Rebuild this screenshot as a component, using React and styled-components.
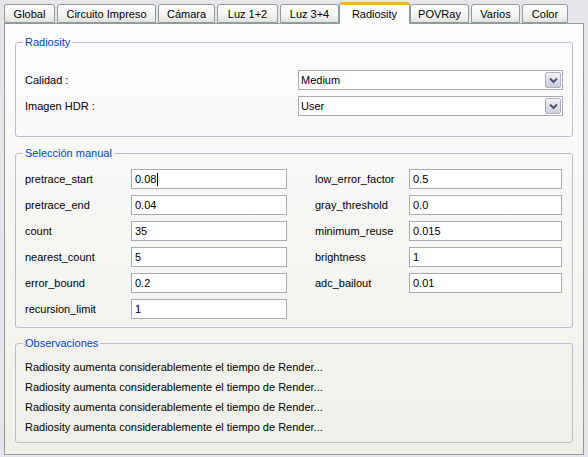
import { Fragment } from "react";
import styled, { createGlobalStyle } from "styled-components";

const GlobalStyle = createGlobalStyle`
  html, body {
    margin: 0;
    padding: 0;
  }
  body {
    font-family: "Liberation Sans", Arial, sans-serif;
    font-size: 11px;
    color: #000;
  }
`;

const Window = styled.div`
  width: 588px;
  height: 457px;
  background: #e6e5ea;
  display: flex;
  flex-direction: column;
  overflow: hidden;
`;

const TabStrip = styled.div`
  height: 23px;
  display: flex;
  align-items: flex-end;
  gap: 2px;
  padding-left: 4px;
  position: relative;
  z-index: 1;
`;

const Tab = styled.div`
  box-sizing: border-box;
  width: ${(p) => p.$w}px;
  height: ${(p) => (p.$active ? 22 : 19)}px;
  margin-left: ${(p) => p.$ml || 0}px;
  margin-bottom: ${(p) => (p.$active ? -1 : 0)}px;
  display: flex;
  align-items: center;
  justify-content: center;
  border: 1px solid #919b9c;
  border-bottom: ${(p) => (p.$active ? "none" : "1px solid #919b9c")};
  border-top: ${(p) => (p.$active ? "3px solid #f3b337" : "1px solid #919b9c")};
  border-radius: 3px 3px 0 0;
  padding-bottom: ${(p) => (p.$active ? 2 : 0)}px;
  background: ${(p) =>
    p.$active
      ? "#fcfcfe"
      : "linear-gradient(#ffffff 0%, #f4f4f2 60%, #e2e2df 100%)"};
  white-space: nowrap;
`;

const Panel = styled.div`
  box-sizing: border-box;
  margin: 0 4px;
  height: 432px;
  border: 1px solid #919b9c;
  background: linear-gradient(#fcfcfe 0%, #f6f6f3 50%, #f0f0ea 100%);
  padding: 12px 10px 0;
  display: flex;
  flex-direction: column;
  gap: 10px;
`;

const Group = styled.fieldset`
  margin: 0;
  margin-top: ${(p) => p.$mt || 0}px;
  min-width: 0;
  border: 1px solid #bcbccc;
  border-radius: 3px;
  padding: ${(p) => p.$pad};
`;

const Legend = styled.legend`
  color: #0046d5;
  padding: 0 2px;
  margin-left: -2px;
  line-height: 13px;
`;

const ComboRows = styled.div`
  display: grid;
  grid-template-columns: 273px 1fr;
  row-gap: 6px;
  align-items: center;
`;

const FieldGrid = styled.div`
  display: grid;
  grid-template-columns: 106px 156px 28px 94px 153px;
  grid-auto-rows: 20px;
  row-gap: 6px;
  align-items: center;
`;

const Label = styled.div`
  grid-column: ${(p) => p.$col || "auto"};
  grid-row: ${(p) => p.$row || "auto"};
  white-space: nowrap;
`;

const Field = styled.div`
  box-sizing: border-box;
  grid-column: ${(p) => p.$col || "auto"};
  grid-row: ${(p) => p.$row || "auto"};
  height: 20px;
  background: #fff;
  border: 1px solid #a5acb2;
  padding: 0 3px;
  display: flex;
  align-items: center;
`;

const Caret = styled.span`
  display: inline-block;
  width: 1px;
  height: 13px;
  background: #000;
  margin-left: 1px;
`;

const Combo = styled.div`
  box-sizing: border-box;
  width: 265px;
  height: 20px;
  background: #fff;
  border: 1px solid #a5acb2;
  display: flex;
  align-items: center;
  justify-content: space-between;
  padding-left: 2px;
`;

const DropButton = styled.div`
  box-sizing: border-box;
  width: 16px;
  height: 16px;
  margin-right: 1px;
  border: 1px solid #aeaec0;
  border-radius: 2px;
  background: linear-gradient(#f0f0f5, #cfcfdb);
  display: flex;
  align-items: center;
  justify-content: center;
`;

const Notes = styled.div`
  display: flex;
  flex-direction: column;
`;

const Note = styled.div`
  height: 20px;
  line-height: 20px;
  white-space: nowrap;
`;

const Chevron = () => (
  <svg width="9" height="7" viewBox="0 0 9 7">
    <path d="M1 1.5 L4.5 5 L8 1.5" fill="none" stroke="#4a5577" strokeWidth="2" />
  </svg>
);

const tabs = [
  { label: "Global", w: 51 },
  { label: "Circuito Impreso", w: 99 },
  { label: "Cámara", w: 57 },
  { label: "Luz 1+2", w: 61 },
  { label: "Luz 3+4", w: 59 },
  { label: "Radiosity", w: 71, ml: -2, active: true },
  { label: "POVRay", w: 59, ml: -2 },
  { label: "Varios", w: 49 },
  { label: "Color", w: 46 },
];

const leftFields = [
  ["pretrace_start", "0.08"],
  ["pretrace_end", "0.04"],
  ["count", "35"],
  ["nearest_count", "5"],
  ["error_bound", "0.2"],
  ["recursion_limit", "1"],
];

const rightFields = [
  ["low_error_factor", "0.5"],
  ["gray_threshold", "0.0"],
  ["minimum_reuse", "0.015"],
  ["brightness", "1"],
  ["adc_bailout", "0.01"],
];

const note = "Radiosity aumenta considerablemente el tiempo de Render...";

export default function App() {
  return (
    <Window>
      <GlobalStyle />
      <TabStrip>
        {tabs.map((t) => (
          <Tab key={t.label} $w={t.w} $ml={t.ml} $active={t.active}>
            {t.label}
          </Tab>
        ))}
      </TabStrip>
      <Panel>
        <Group $pad="21px 9px 20px">
          <Legend>Radiosity</Legend>
          <ComboRows>
            <Label>Calidad :</Label>
            <Combo>
              Medium
              <DropButton>
                <Chevron />
              </DropButton>
            </Combo>
            <Label>Imagen HDR :</Label>
            <Combo>
              User
              <DropButton>
                <Chevron />
              </DropButton>
            </Combo>
          </ComboRows>
        </Group>
        <Group $pad="9px 9px 8px">
          <Legend>Selección manual</Legend>
          <FieldGrid>
            {leftFields.map(([name, value], i) => (
              <Fragment key={name}>
                <Label $col="1" $row={i + 1}>
                  {name}
                </Label>
                <Field $col="2" $row={i + 1}>
                  {value}
                  {i === 0 && <Caret />}
                </Field>
              </Fragment>
            ))}
            {rightFields.map(([name, value], i) => (
              <Fragment key={name}>
                <Label $col="4" $row={i + 1}>
                  {name}
                </Label>
                <Field $col="5" $row={i + 1}>
                  {value}
                </Field>
              </Fragment>
            ))}
          </FieldGrid>
        </Group>
        <Group $pad="7px 9px 5px" $mt={-1}>
          <Legend>Observaciones</Legend>
          <Notes>
            {[0, 1, 2, 3].map((i) => (
              <Note key={i}>{note}</Note>
            ))}
          </Notes>
        </Group>
      </Panel>
    </Window>
  );
}
